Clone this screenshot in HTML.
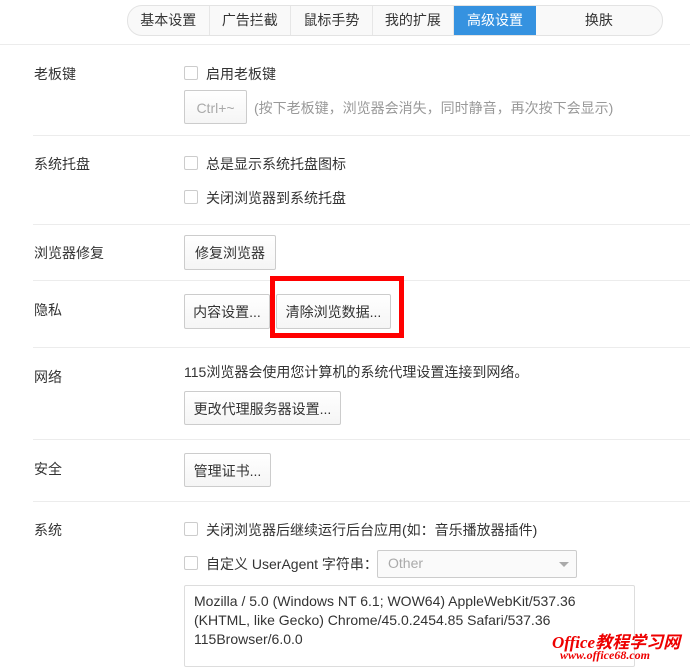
<!DOCTYPE html><html><head><meta charset="utf-8"><style>
body{margin:0;width:690px;height:667px;overflow:hidden;background:#fff;font-family:"Liberation Sans","Noto Sans CJK SC",sans-serif;font-size:14px;color:#333;position:relative}
.a{position:absolute;white-space:nowrap}
.tabs{position:absolute;left:127px;top:5px;width:534px;height:29px;border:1px solid #e3e3e3;border-radius:15px;background:#f9f9f9;overflow:hidden;display:flex}
.tabs div{height:29px;line-height:29px;text-align:center;border-right:1px solid #e6e6e6;color:#333}
.hr{position:absolute;left:33px;right:0;height:1px;background:#ececec}
.lbl{position:absolute;left:34px}
.cb{position:absolute;width:12px;height:12px;border:1px solid #ccc;border-radius:2px;background:#fff}
.btn{position:absolute;height:33px;border:1px solid #ccc;border-radius:2px;background:linear-gradient(#fff,#f5f5f5);line-height:33px;text-align:center;color:#333;box-sizing:border-box}
</style></head><body>
<div class="tabs">
<div style="width:81px">基本设置</div><div style="width:81px">广告拦截</div><div style="width:81px">鼠标手势</div><div style="width:81px">我的扩展</div><div style="width:82px;background:#3592e0;color:#fff;border-right:none">高级设置</div><div style="width:127px;border-right:none">换肤</div>
</div>
<div class="hr" style="left:0;top:44px"></div>

<div class="lbl a" style="top:64px">老板键</div>
<div class="cb" style="left:184px;top:66px"></div><div class="a" style="left:206px;top:64px">启用老板键</div>
<div class="btn" style="left:184px;top:90px;width:63px;height:34px;line-height:34px;color:#aaa">Ctrl+~</div>
<div class="a" style="left:254px;top:98px;color:#999">(按下老板键，浏览器会消失，同时静音，再次按下会显示)</div>
<div class="hr" style="top:135px"></div>

<div class="lbl a" style="top:154px">系统托盘</div>
<div class="cb" style="left:184px;top:156px"></div><div class="a" style="left:206px;top:154px">总是显示系统托盘图标</div>
<div class="cb" style="left:184px;top:190px"></div><div class="a" style="left:206px;top:188px">关闭浏览器到系统托盘</div>
<div class="hr" style="top:224px"></div>

<div class="lbl a" style="top:243px">浏览器修复</div>
<div class="btn" style="left:184px;top:235px;width:92px;height:35px;line-height:35px">修复浏览器</div>
<div class="hr" style="top:280px"></div>

<div class="lbl a" style="top:300px">隐私</div>
<div class="btn" style="left:184px;top:294px;width:86px;height:35px;line-height:35px">内容设置...</div>
<div class="btn" style="left:276px;top:294px;width:115px;height:35px;line-height:35px">清除浏览数据...</div>
<div class="a" style="left:270px;top:276px;width:124px;height:52px;border:5px solid #f00"></div>
<div class="hr" style="top:347px"></div>

<div class="lbl a" style="top:367px">网络</div>
<div class="a" style="left:184px;top:362px">115浏览器会使用您计算机的系统代理设置连接到网络。</div>
<div class="btn" style="left:184px;top:391px;width:157px;height:34px;line-height:34px">更改代理服务器设置...</div>
<div class="hr" style="top:439px"></div>

<div class="lbl a" style="top:459px">安全</div>
<div class="btn" style="left:184px;top:453px;width:87px;height:34px;line-height:34px">管理证书...</div>
<div class="hr" style="top:501px"></div>

<div class="lbl a" style="top:520px">系统</div>
<div class="cb" style="left:184px;top:522px"></div><div class="a" style="left:206px;top:520px">关闭浏览器后继续运行后台应用(如：音乐播放器插件)</div>
<div class="cb" style="left:184px;top:556px"></div><div class="a" style="left:206px;top:554px">自定义 UserAgent 字符串：</div>
<div class="a" style="left:377px;top:550px;width:198px;height:26px;border:1px solid #ccc;border-radius:2px;background:#fafafa"><span class="a" style="left:10px;top:4px;color:#aaa">Other</span><span class="a" style="right:7px;top:11px;width:0;height:0;border-left:5px solid transparent;border-right:5px solid transparent;border-top:5px solid #aaa"></span></div>
<div class="a" style="left:184px;top:585px;width:449px;height:80px;border:1px solid #ddd;border-radius:2px;padding:0;white-space:normal">
<div style="position:absolute;left:9px;top:6px;line-height:19px;width:440px">Mozilla / 5.0 (Windows NT 6.1; WOW64) AppleWebKit/537.36<br>(KHTML, like Gecko) Chrome/45.0.2454.85 Safari/537.36<br>115Browser/6.0.0</div></div>
<div class="a" style="left:552px;top:628px;color:#e00;font:italic bold 17px 'Liberation Serif','Noto Sans CJK SC',serif">Office教程学习网</div>
<div class="a" style="left:560px;top:648px;color:#e00;font:italic bold 12px 'Liberation Serif',serif">www.office68.com</div>
</body></html>
